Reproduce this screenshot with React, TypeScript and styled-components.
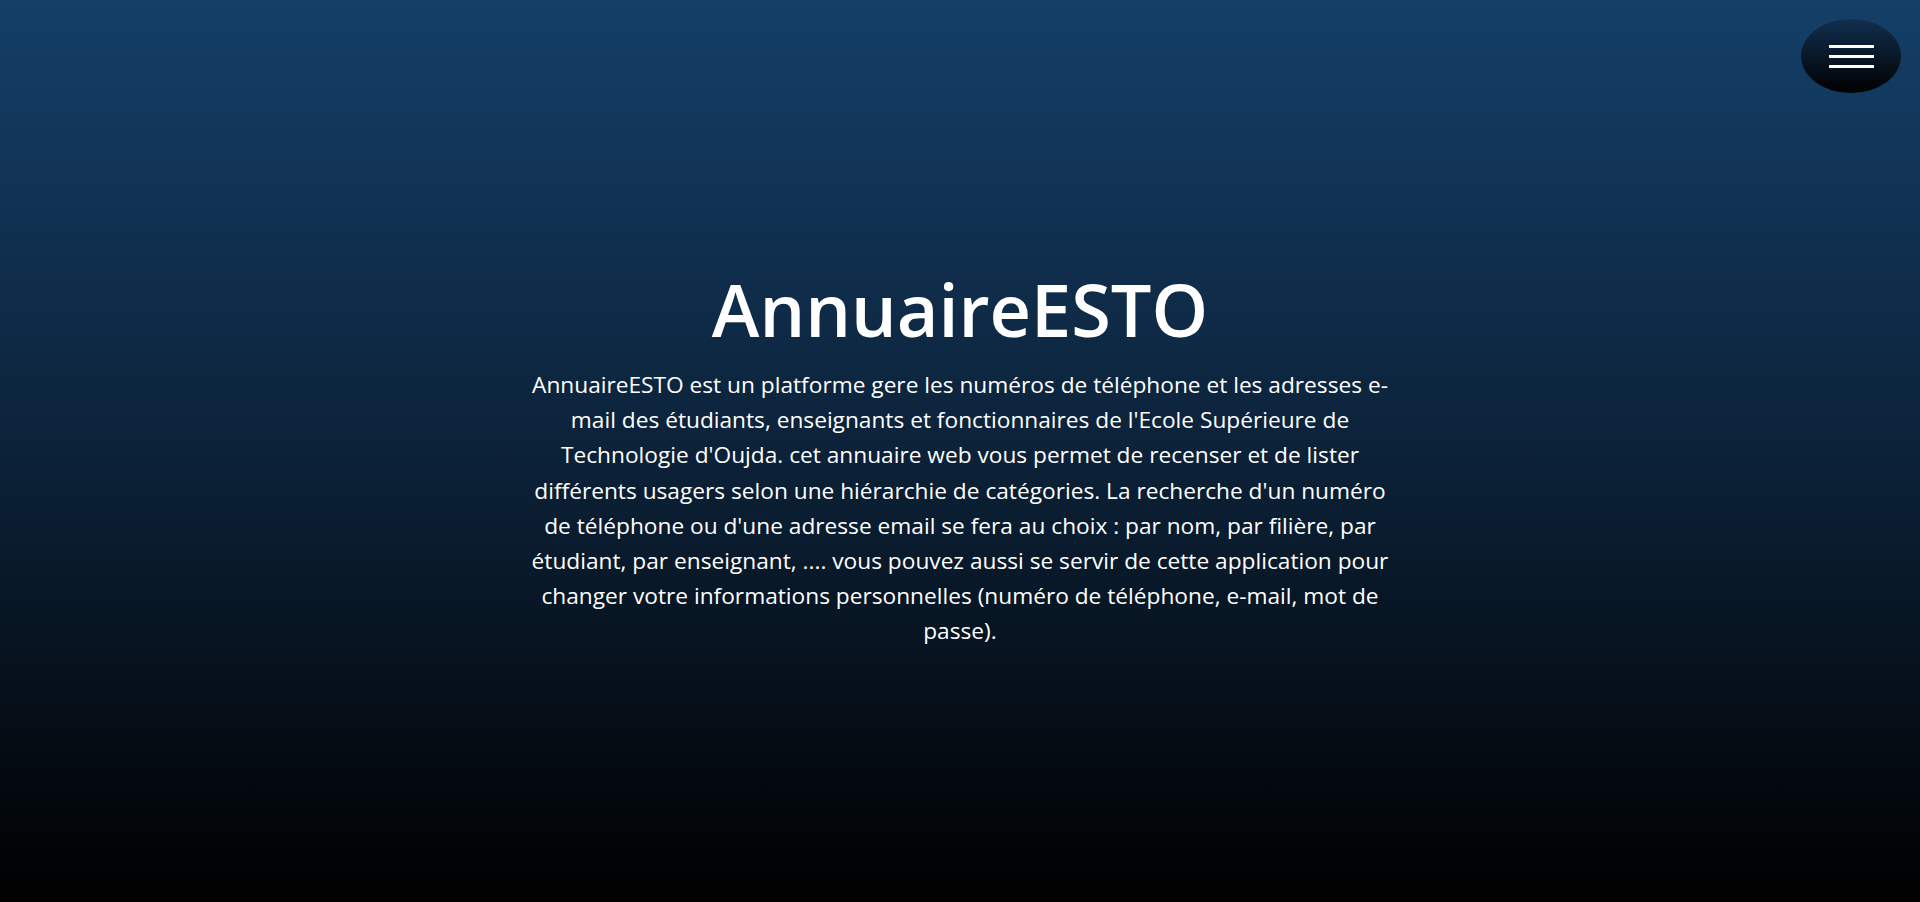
import React from "react";
import styled, { createGlobalStyle } from "styled-components";

const Global = createGlobalStyle`
  html, body { margin: 0; padding: 0; }
  body { font-family: "Open Sans", sans-serif; background: #000; }
`;

const Page = styled.main`
  position: relative;
  height: 902px;
  background: linear-gradient(to bottom, #143f68 0%, #0c2239 50%, #000 100%);
  display: flex;
  flex-direction: column;
  align-items: center;
  padding-top: 264px;
  box-sizing: border-box;
  color: #fff;
`;

const Title = styled.h1`
  margin: 0;
  font-family: "Open Sans", sans-serif;
  font-weight: 600;
  font-size: 72px;
  line-height: 90px;
  letter-spacing: 0;
`;

const Text = styled.p`
  margin: 13px 0 0;
  width: 874px;
  text-align: center;
  font-family: "Open Sans", sans-serif;
  font-size: 22.7px;
  line-height: 35.2px;
`;

const MenuButton = styled.button`
  position: absolute;
  top: 19px;
  right: 19px;
  width: 100px;
  height: 74px;
  border: none;
  border-radius: 50%;
  background: linear-gradient(to bottom, #112f4f 0%, #000 100%);
  display: flex;
  flex-direction: column;
  align-items: center;
  justify-content: center;
  gap: 7px;
  padding: 0;
  cursor: pointer;
`;

const Bar = styled.span`
  display: block;
  width: 45px;
  height: 3px;
  background: #fff;
`;

export default function App() {
  return (
    <>
      <Global />
      <Page>
        <MenuButton aria-label="menu">
          <Bar />
          <Bar />
          <Bar />
        </MenuButton>
        <Title>AnnuaireESTO</Title>
        <Text>
          AnnuaireESTO est un platforme gere les numéros de téléphone et les adresses e-mail des étudiants,
          enseignants et fonctionnaires de l'Ecole Supérieure de Technologie d'Oujda. cet annuaire web vous
          permet de recenser et de lister différents usagers selon une hiérarchie de catégories. La recherche
          d'un numéro de téléphone ou d'une adresse email se fera au choix : par nom, par filière, par étudiant,
          par enseignant, .... vous pouvez aussi se servir de cette application pour changer votre informations
          personnelles (numéro de téléphone, e-mail, mot de passe).
        </Text>
      </Page>
    </>
  );
}
